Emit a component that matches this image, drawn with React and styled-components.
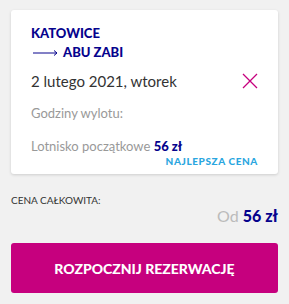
import styled, { createGlobalStyle } from 'styled-components';

const GlobalStyle = createGlobalStyle`
    body {
        margin: 0;
        background: #f1f1f1;
        font-family: Lato, "Liberation Sans", sans-serif;
    }
`

const Page = styled.div`
    padding: 10px 11px;
`

const Card = styled.div`
    background: #fff;
    border-radius: 3px;
    box-shadow: 0 1px 3px rgba(0, 0, 0, 0.15);
    padding: 14px 20px 7px 20px;
`

const City = styled.div`
    color: #06038d;
    font-weight: 900;
    font-size: 13px;
    line-height: 19px;
    display: flex;
    align-items: center;
    gap: 4px;
`

const Arrow = styled.svg`
    width: 26px;
    height: 8px;
    margin-left: 2px;
`

const DateRow = styled.div`
    display: flex;
    justify-content: space-between;
    align-items: center;
    margin-top: 9px;
    font-size: 15px;
    color: #333;
    line-height: 20px;
`

const CloseIcon = styled.svg`
    width: 16px;
    height: 16px;
`

const Muted = styled.div`
    color: #999;
    font-size: 13px;
    line-height: 18px;
    margin-top: ${props => props.gap}px;
`

const Price = styled.span`
    color: #06038d;
    font-weight: 900;
`

const Badge = styled.div`
    text-align: right;
    color: #2aa6e0;
    font-size: 10px;
    font-weight: 900;
    letter-spacing: 0.6px;
    line-height: 12px;
`

const TotalLabel = styled.div`
    margin-top: 20px;
    font-size: 10px;
    color: #333;
    line-height: 12px;
`

const Total = styled.div`
    text-align: right;
    font-size: 16px;
    line-height: 20px;
    color: #bbb;
`

const BookButton = styled.button`
    display: block;
    width: 100%;
    margin-top: 17px;
    height: 50px;
    background: #c6007e;
    border: none;
    border-radius: 3px;
    color: #fff;
    font-family: inherit;
    font-weight: 900;
    font-size: 14px;
`

export default function App() {
    return (
        <Page>
            <GlobalStyle />
            <Card>
                <City>KATOWICE</City>
                <City>
                    <Arrow viewBox="0 0 26 8">
                        <path d="M0 4H24M21 1.5L24 4L21 6.5" stroke="#06038d" strokeWidth="1" fill="none" />
                    </Arrow>
                    ABU ZABI
                </City>
                <DateRow>
                    <span>2 lutego 2021, wtorek</span>
                    <CloseIcon viewBox="0 0 16 16">
                        <path d="M1 1L15 15M15 1L1 15" stroke="#c6007e" strokeWidth="1.3" />
                    </CloseIcon>
                </DateRow>
                <Muted gap={13}>Godziny wylotu:</Muted>
                <Muted gap={15}>Lotnisko początkowe <Price>56 zł</Price></Muted>
                <Badge>NAJLEPSZA CENA</Badge>
            </Card>
            <TotalLabel>CENA CAŁKOWITA:</TotalLabel>
            <Total>Od <Price>56 zł</Price></Total>
            <BookButton>ROZPOCZNIJ REZERWACJĘ</BookButton>
        </Page>
    )
}
